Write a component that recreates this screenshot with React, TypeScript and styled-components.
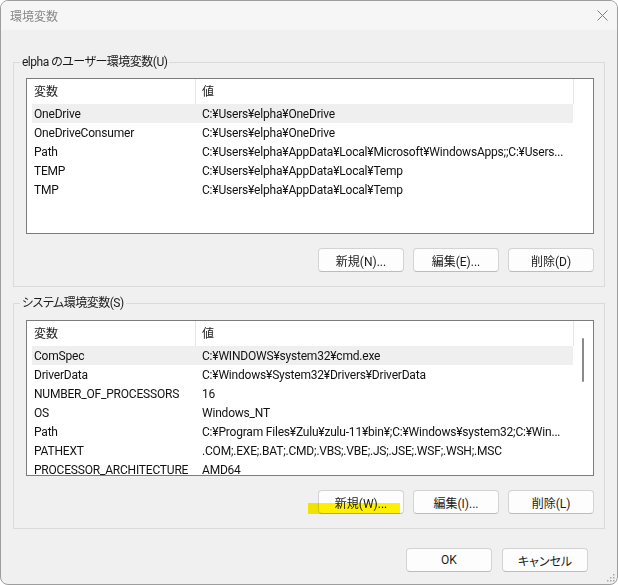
import React from "react";
import styled, { createGlobalStyle } from "styled-components";

const FONT = `Roboto, "Noto Sans CJK JP", sans-serif`;

const GlobalStyle = createGlobalStyle`
  html, body { margin: 0; padding: 0; background: #ffffff; }
  body { font-family: ${FONT}; font-size: 12px; font-feature-settings: "palt"; }
  * { box-sizing: border-box; }
`;

const Window = styled.div`
  position: relative;
  width: 618px;
  height: 585px;
  border: 1px solid #9d9d9d;
  border-radius: 8px;
  background: #f0f0f0;
  overflow: hidden;
  display: flex;
  flex-direction: column;
`;

const TitleBar = styled.div`
  height: 29px;
  flex: none;
  display: flex;
  align-items: center;
  justify-content: space-between;
  padding: 0 9px 0 9px;
  background: #f6f6f6;
`;

const Title = styled.span`
  font-family: ${FONT};
  font-size: 12px;
  color: #8a8a8a;
`;

const CloseIcon = styled.svg`
  width: 11px;
  height: 11px;
  display: block;
`;

const Body = styled.div`
  padding: 0 12px;
  display: flex;
  flex-direction: column;
`;

const Group = styled.fieldset<{ $top: number }>`
  margin: ${(p) => p.$top}px 0 0;
  padding: 0;
  border: 1px solid #dadada;
  min-width: 0;
`;

const Legend = styled.legend`
  margin-left: 6px;
  padding: 0 2px;
  font-family: ${FONT};
  font-size: 12px;
  line-height: 16px;
  letter-spacing: -0.5px;
  color: #1a1a1a;
`;

const GroupInner = styled.div<{ $top: number }>`
  padding: ${(p) => p.$top}px 10px 14px 12px;
  display: flex;
  flex-direction: column;
`;

const List = styled.div`
  position: relative;
  height: 156px;
  border: 1px solid #7c7c7c;
  background: #ffffff;
  overflow: hidden;
`;

const HeaderRow = styled.div`
  display: grid;
  grid-template-columns: 169px 378px;
  height: 25px;
`;

const HeaderCell = styled.div<{ $pad: number }>`
  height: 25px;
  border-right: 1px solid #e5e5e5;
  padding-left: ${(p) => p.$pad}px;
  line-height: 27px;
  color: #222;
  white-space: nowrap;
  overflow: hidden;
`;

const Row = styled.div<{ $selected?: boolean }>`
  display: grid;
  grid-template-columns: 163px 378px;
  width: 541px;
  height: 19px;
  margin-left: 5px;
  background: ${(p) => (p.$selected ? "#efefef" : "transparent")};
`;

const Cell = styled.div<{ $pad: number }>`
  height: 19px;
  padding-left: ${(p) => p.$pad}px;
  line-height: 21px;
  letter-spacing: -0.2px;
  color: #111;
  white-space: nowrap;
  overflow: hidden;
`;

const ScrollThumb = styled.div`
  position: absolute;
  left: 555px;
  top: 17px;
  width: 2px;
  height: 44px;
  border-radius: 1px;
  background: #8a8a8a;
`;

const ButtonRow = styled.div<{ $gap: number }>`
  display: flex;
  justify-content: flex-end;
  gap: ${(p) => p.$gap}px;
`;

const GroupButtons = styled(ButtonRow)`
  margin-top: 14px;
`;

const Footer = styled(ButtonRow)`
  padding: 19px 29px 0 0;
`;

const Button = styled.button`
  position: relative;
  width: 86px;
  height: 24px;
  padding: 0;
  border: 1px solid #d3d3d3;
  border-bottom-color: #bcbcbc;
  border-radius: 4px;
  background: #fdfdfd;
  font-family: ${FONT};
  font-size: 12px;
  font-feature-settings: "palt";
  color: #1b1b1b;
`;

const Marker = styled.span`
  position: absolute;
  left: -11px;
  top: 12px;
  width: 92px;
  height: 11px;
  background: #fff200;
  mix-blend-mode: multiply;
  pointer-events: none;
`;

const Grip = styled.svg`
  position: absolute;
  right: 1px;
  bottom: 1px;
  width: 11px;
  height: 11px;
`;

type Var = { name: string; value: string };

const userVars: Var[] = [
  { name: "OneDrive", value: "C:¥Users¥elpha¥OneDrive" },
  { name: "OneDriveConsumer", value: "C:¥Users¥elpha¥OneDrive" },
  { name: "Path", value: "C:¥Users¥elpha¥AppData¥Local¥Microsoft¥WindowsApps;;C:¥Users..." },
  { name: "TEMP", value: "C:¥Users¥elpha¥AppData¥Local¥Temp" },
  { name: "TMP", value: "C:¥Users¥elpha¥AppData¥Local¥Temp" },
];

const systemVars: Var[] = [
  { name: "ComSpec", value: "C:¥WINDOWS¥system32¥cmd.exe" },
  { name: "DriverData", value: "C:¥Windows¥System32¥Drivers¥DriverData" },
  { name: "NUMBER_OF_PROCESSORS", value: "16" },
  { name: "OS", value: "Windows_NT" },
  { name: "Path", value: "C:¥Program Files¥Zulu¥zulu-11¥bin¥;C:¥Windows¥system32;C:¥Win..." },
  { name: "PATHEXT", value: ".COM;.EXE;.BAT;.CMD;.VBS;.VBE;.JS;.JSE;.WSF;.WSH;.MSC" },
  { name: "PROCESSOR_ARCHITECTURE", value: "AMD64" },
];

const VarList: React.FC<{ vars: Var[]; scroll?: boolean }> = ({ vars, scroll }) => (
  <List>
    <HeaderRow>
      <HeaderCell $pad={7}>変数</HeaderCell>
      <HeaderCell $pad={6}>値</HeaderCell>
    </HeaderRow>
    {vars.map((v, i) => (
      <Row key={v.name + i} $selected={i === 0}>
        <Cell $pad={2}>{v.name}</Cell>
        <Cell $pad={7}>{v.value}</Cell>
      </Row>
    ))}
    {scroll && <ScrollThumb />}
  </List>
);

export default function App() {
  return (
    <>
      <GlobalStyle />
      <Window>
        <TitleBar>
          <Title>環境変数</Title>
          <CloseIcon viewBox="0 0 11 11">
            <path d="M0.5 0.5 L10.5 10.5 M10.5 0.5 L0.5 10.5" stroke="#7f7f7f" strokeWidth="1" fill="none" />
          </CloseIcon>
        </TitleBar>
        <Body>
          <Group $top={24}>
            <Legend>elpha のユーザー環境変数(U)</Legend>
            <GroupInner $top={8}>
              <VarList vars={userVars} />
              <GroupButtons $gap={9}>
                <Button>新規(N)...</Button>
                <Button>編集(E)...</Button>
                <Button>削除(D)</Button>
              </GroupButtons>
            </GroupInner>
          </Group>
          <Group $top={8}>
            <Legend>システム環境変数(S)</Legend>
            <GroupInner $top={9}>
              <VarList vars={systemVars} scroll />
              <GroupButtons $gap={9}>
                <Button>
                  新規(W)...
                  <Marker />
                </Button>
                <Button>編集(I)...</Button>
                <Button>削除(L)</Button>
              </GroupButtons>
            </GroupInner>
          </Group>
        </Body>
        <Footer $gap={10}>
          <Button>OK</Button>
          <Button>キャンセル</Button>
        </Footer>
        <Grip viewBox="0 0 11 11">
          {[
            [8, 8], [5, 8], [2, 8], [8, 5], [5, 5], [8, 2],
          ].map(([x, y], i) => (
            <rect key={i} x={x} y={y} width="1.5" height="1.5" fill="#a8a8a8" />
          ))}
        </Grip>
      </Window>
    </>
  );
}
